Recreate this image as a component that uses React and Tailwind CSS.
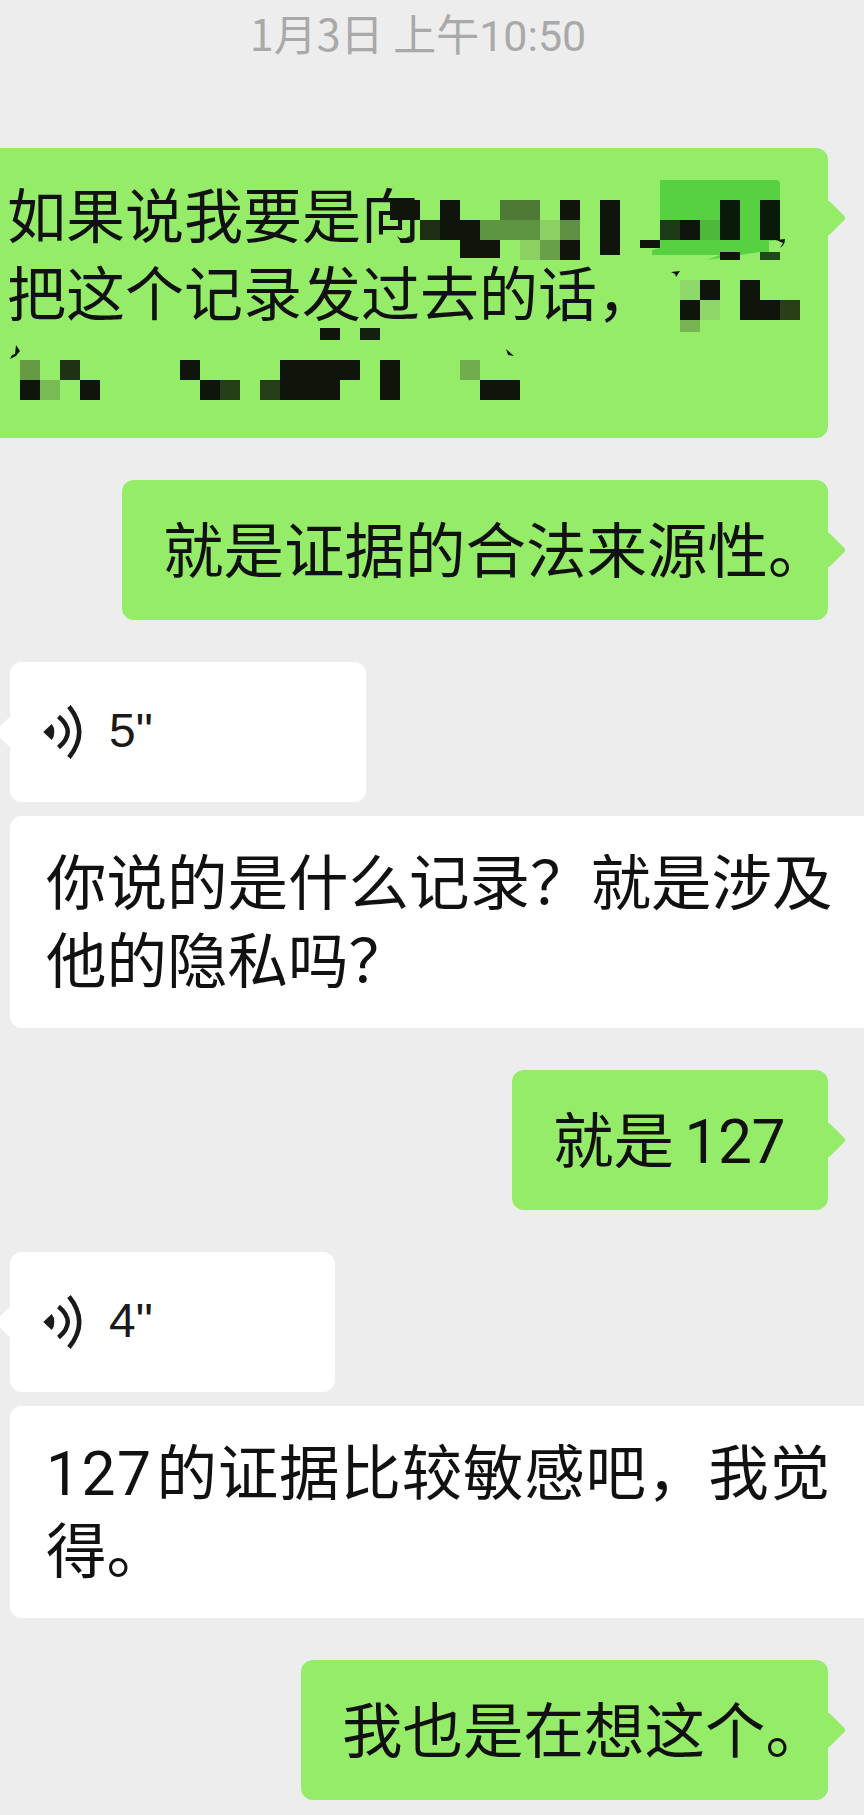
const DARK = "#0f150a";

// mosaic blocks over the first bubble: [x, y, w, h, colour], in page pixels
const mosaic = [
  [390, 200, 30, 20, DARK],
  [440, 200, 20, 20, DARK],
  [500, 200, 40, 20, "#4f7a35"],
  [560, 200, 20, 20, DARK],
  [600, 200, 20, 55, DARK],
  [420, 220, 20, 20, "#1f2e14"],
  [440, 220, 40, 20, DARK],
  [480, 220, 60, 20, "#5d9543"],
  [540, 220, 20, 20, "#8ccf62"],
  [560, 220, 20, 20, "#5f8f42"],
  [460, 240, 40, 18, DARK],
  [520, 240, 20, 20, "#8ccf62"],
  [540, 240, 20, 20, "#6a9f4a"],
  [560, 240, 20, 20, DARK],
  [640, 240, 20, 8, DARK],
  [660, 220, 20, 20, "#1d3a17"],
  [680, 220, 20, 20, DARK],
  [700, 220, 20, 20, "#4fb83a"],
  [720, 200, 20, 40, "#0a1a08"],
  [760, 200, 20, 40, "#0a1a08"],
  [720, 252, 20, 8, DARK],
  [760, 252, 20, 8, "#1d4a17"],
  [680, 280, 20, 20, "#8fd96a"],
  [700, 280, 20, 20, DARK],
  [740, 280, 20, 20, DARK],
  [680, 300, 20, 20, DARK],
  [700, 300, 20, 20, "#8ed668"],
  [740, 300, 40, 20, DARK],
  [780, 300, 20, 20, "#2a3f18"],
  [680, 320, 20, 12, "#76b552"],
  [320, 328, 20, 12, DARK],
  [360, 328, 20, 12, "#14200e"],
  [20, 360, 20, 20, "#669a45"],
  [60, 360, 20, 20, "#1f3214"],
  [180, 360, 20, 20, DARK],
  [280, 360, 80, 20, DARK],
  [380, 360, 20, 40, DARK],
  [460, 360, 20, 20, "#70ad4e"],
  [20, 380, 20, 20, DARK],
  [40, 380, 20, 20, "#78bb55"],
  [80, 380, 20, 20, DARK],
  [200, 380, 20, 20, DARK],
  [220, 380, 20, 20, "#253e17"],
  [260, 380, 20, 20, "#253e17"],
  [280, 380, 60, 20, DARK],
  [480, 380, 40, 20, DARK],
];

const Mosaic = () => (
  <svg
    className="absolute left-0 top-0 w-[828px] h-[290px]"
    viewBox="0 148 828 290"
    fill="none"
  >
    <path
      d="M660 180H776Q780 180 780 184V240L769 241V260H760V252L707 260L720 255H652V250L660 248Z"
      fill="#57d042"
    />
    {mosaic.map(([x, y, w, h, c], i) => (
      <rect key={i} x={x} y={y} width={w} height={h} fill={c} />
    ))}
    {/* leftover scraps of the hidden strokes */}
    <path d="M397 236Q402 241 410 236L409 241Q401 244 397 236Z" fill={DARK} />
    <path d="M671 272L680 271L676 277L675 274Z" fill={DARK} />
    <path d="M776 240L785 239Q785 245 780 248L783 243Z" fill={DARK} />
    <path d="M16 345L20 351L16 356L10 359L12 355L15 354Z" fill={DARK} />
    <path d="M506 349L514 356L508 355Z" fill={DARK} />
  </svg>
);

const VoiceIcon = () => (
  <svg className="w-[42px] h-[56px] shrink-0" viewBox="0 0 42 56" fill="none">
    <path d="M1.3 28L9.7 20Q12.3 23 12.3 28T9.7 36Z" fill="#1a1a1a" />
    <path d="M16.5 12.5Q35 28 16.5 43.5" stroke="#1a1a1a" strokeWidth="4.5" />
    <path d="M27 2.5Q47.5 28 27 53.5" stroke="#1a1a1a" strokeWidth="4.5" />
  </svg>
);

const Digits = ({ children, className = "" }) => (
  <span className={`font-['Roboto',sans-serif] leading-none ${className}`}>
    {children}
  </span>
);

const Sent = ({ children, width }) => (
  <div className="flex justify-end pr-[36px]">
    <div
      className={`relative bg-[#95ec69] rounded-[12px] h-[140px] flex items-center pl-[41px] text-[60.5px] leading-[78px] whitespace-nowrap ${width}`}
    >
      <div className="absolute right-[-13px] top-[57px] w-[26px] h-[26px] bg-[#95ec69] rotate-45 rounded-[3px]" />
      <div className="relative mt-[-6px]">{children}</div>
    </div>
  </div>
);

const Voice = ({ secs, width }) => (
  <div className="pl-[10px]">
    <div
      className={`relative bg-white rounded-[12px] h-[140px] flex items-center pl-[32px] ${width}`}
    >
      <div className="absolute left-[-10px] top-[57px] w-[26px] h-[26px] bg-white rotate-45 rounded-[3px]" />
      <div className="relative flex items-center">
        <VoiceIcon />
        <span className="ml-[25px] text-[48px] mt-[-2px] text-[#1a1a1a] font-['Liberation_Sans',sans-serif]">
          {secs}"
        </span>
      </div>
    </div>
  </div>
);

const Received = ({ first, second }) => (
  <div className="pl-[10px]">
    <div className="bg-white rounded-l-[12px] h-[212px] pt-[24px] pl-[36px] whitespace-nowrap text-[60.5px] leading-[78px]">
      <div className="h-[78px]">{first}</div>
      <div className="h-[78px]">{second}</div>
    </div>
  </div>
);

export default function App() {
  return (
    <div className="w-[864px] h-[1815px] overflow-hidden bg-[#ededed] text-[#111111] font-['Noto_Sans_CJK_SC',sans-serif]">
      <div className="h-[148px] pt-[6px] pr-[28px] text-center text-[43px] leading-[52px] text-[#a9a9a9]">
        1月3日 上午<Digits>10:50</Digits>
      </div>

      {/* first bubble runs off the left edge */}
      <div className="pr-[36px]">
        <div className="relative bg-[#95ec69] rounded-r-[12px] h-[290px] pl-[7px] pt-[26px] text-[59px] leading-[78px] whitespace-nowrap">
          <div className="absolute right-[-13px] top-[57px] w-[26px] h-[26px] bg-[#95ec69] rotate-45 rounded-[3px]" />
          <div className="relative">
            如果说我要是向
            <br />
            把这个记录发过去的话，
          </div>
          <Mosaic />
        </div>
      </div>

      <div className="mt-[42px]">
        <Sent width="w-[706px]">就是证据的合法来源性。</Sent>
      </div>

      <div className="mt-[42px]">
        <Voice secs={5} width="w-[356px]" />
      </div>
      <div className="mt-[14px]">
        <Received first="你说的是什么记录？就是涉及" second="他的隐私吗？" />
      </div>

      <div className="mt-[42px]">
        <Sent width="w-[316px]">
          就是 <Digits className="ml-[-3px] tracking-[-0.5px]">127</Digits>
        </Sent>
      </div>

      <div className="mt-[42px]">
        <Voice secs={4} width="w-[325px]" />
      </div>
      <div className="mt-[14px]">
        <Received
          first={
            <>
              <Digits className="tracking-[1.5px] mr-[4px]">127</Digits>
              <span className="tracking-[0.8px]">的证据比较敏感吧，我觉</span>
            </>
          }
          second="得。"
        />
      </div>

      <div className="mt-[42px]">
        <Sent width="w-[527px]">我也是在想这个。</Sent>
      </div>
    </div>
  );
}
